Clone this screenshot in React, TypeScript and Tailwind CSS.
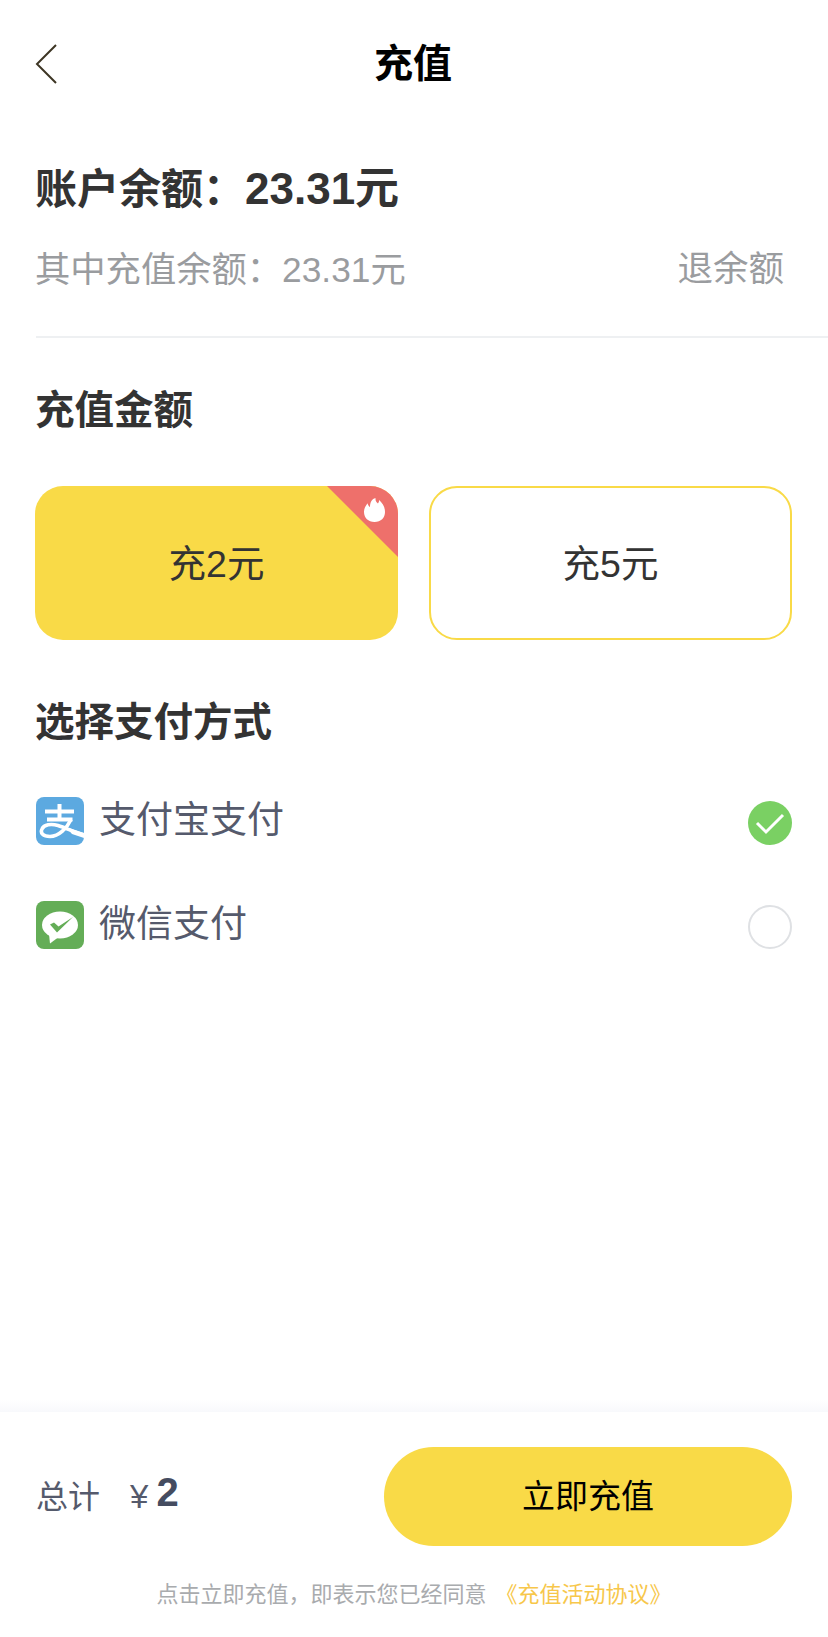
import { useState } from "react";

const fontStack = "font-['Liberation_Sans','Noto_Sans_CJK_SC',sans-serif]";

function BackIcon() {
  return (
    <svg width="24" height="42" viewBox="0 0 24 42" fill="none">
      <path d="M21 2 L2 21 L21 40" stroke="#3d3524" strokeWidth="2" />
    </svg>
  );
}

function AlipayIcon() {
  return (
    <svg width="48" height="48" viewBox="0 0 48 48" className="shrink-0">
      <rect width="48" height="48" rx="8" fill="#5ca9e0" />
      <path d="M9 14.500h29M23.500 7v15.500M11 22.500h25.500" stroke="#fff" strokeWidth="4" fill="none" />
      <path
        d="M35 22.500C31 31 23 39.500 14 39.500C7 39.500 4 36 6 32C8 27.500 15 26.500 22 28.500C30 31 38 35 48 38"
        stroke="#fff"
        strokeWidth="3.600"
        fill="none"
      />
      <path d="M30 30L48 36V41L36 37Z" fill="#fff" />
    </svg>
  );
}

function WechatIcon() {
  return (
    <svg width="48" height="48" viewBox="0 0 48 48" className="shrink-0">
      <rect width="48" height="48" rx="8" fill="#64ad57" />
      <ellipse cx="24" cy="24" rx="18" ry="13.500" fill="#fff" />
      <path d="M13 33l1 9.500l8-6z" fill="#fff" />
      <path d="M14 23.500L18 21.500L22.500 25.500L37 16L21 31.500Z" fill="#64ad57" />
    </svg>
  );
}

function FlameCorner() {
  return (
    <svg width="71" height="71" viewBox="0 0 71 71" className="absolute right-0 top-0">
      <path d="M0 0H71V71Z" fill="#ee706b" />
      <path
        d="M47.500 36c-6.200 0-10.500-4.300-10.500-10c0-4 2-6.300 3.500-8.800c.5 2 1.300 3 2.500 3.800c0-4.500 2-8.300 5.500-9c-.3 3.500 1.200 4.500 2.500 5.500c.8-1 1.200-2.200 1.200-3.500c3.300 3.500 5.800 6.500 5.800 12c0 5.800-4 10-10.500 10Z"
        fill="#fff"
      />
    </svg>
  );
}

export default function App() {
  const [amount, setAmount] = useState(2);
  const [pay, setPay] = useState("alipay");

  const payments = [
    { id: "alipay", label: "支付宝支付", icon: <AlipayIcon /> },
    { id: "wechat", label: "微信支付", icon: <WechatIcon /> },
  ];

  return (
    <div className={`flex h-[1637px] w-[828px] flex-col overflow-hidden bg-white ${fontStack}`}>
      <header className="relative flex h-[128px] items-center justify-center">
        <button type="button" className="absolute left-[35px] top-[43px]">
          <BackIcon />
        </button>
        <h1 className="pr-[2px] text-[39px] font-bold text-black">充值</h1>
      </header>

      <div className="mt-[28px] flex h-[56px] items-baseline pl-[35px] font-bold text-[#333333]">
        <span className="text-[42px]">账户余额：</span>
        <span className="text-[44px]">23.31元</span>
      </div>
      <div className="mt-[30px] flex h-[56px] items-center justify-between pl-[35px] pr-[44px] text-[35.300px] text-[#9a9c9f]">
        <span>其中充值余额：23.31元</span>
        <button type="button" className="text-[35.500px]">退余额</button>
      </div>
      <div className="ml-[36px] mt-[38px] h-[2px] bg-[#eef0f2]" />

      <h2 className="mt-[45px] flex h-[56px] items-center pl-[35px] text-[39.500px] font-bold text-[#333333]">
        充值金额
      </h2>
      <div className="mt-[47px] flex gap-[31px] px-[35px]">
        {[2, 5].map((n) => (
          <button
            key={n}
            type="button"
            onClick={() => setAmount(n)}
            className={`relative flex h-[154px] w-[363px] items-center justify-center overflow-hidden rounded-[28px] pt-[3px] text-[37.500px] text-[#333333] ${
              amount === n ? "bg-[#f9da47]" : "border-2 border-[#f9da47] bg-white"
            }`}
          >
            {n === 2 && <FlameCorner />}
            充{n}元
          </button>
        ))}
      </div>

      <h2 className="mt-[55px] flex h-[56px] items-center pl-[35px] text-[39.500px] font-bold text-[#333333]">
        选择支付方式
      </h2>
      <div className="mt-[46px] flex flex-col gap-[56px] px-[36px]">
        {payments.map((p) => (
          <div key={p.id} className="flex h-[48px] items-center" onClick={() => setPay(p.id)}>
            {p.icon}
            <span className="ml-[15px] text-[37px] text-[#555a6c]">{p.label}</span>
            {pay === p.id ? (
              <span className="ml-auto mt-[4px] flex h-[44px] w-[44px] items-center justify-center rounded-full bg-[#7ad063]">
                <svg width="30" height="24" viewBox="0 0 30 24" fill="none">
                  <path d="M2 12l9 9L28 4" stroke="#fff" strokeWidth="3" />
                </svg>
              </span>
            ) : (
              <span className="ml-auto mt-[4px] h-[44px] w-[44px] rounded-full border-2 border-[#dfe1e4]" />
            )}
          </div>
        ))}
      </div>

      <footer className="mt-auto">
        <div className="h-[12px] bg-gradient-to-b from-white to-[#f8f9fc]" />
        <div className="flex items-center justify-between px-[36px] pt-[35px]">
          <div className="flex -translate-y-[3px] items-baseline text-[#555a6c]">
            <span className="text-[32px]">总计</span>
            <span className="ml-[30px] text-[33px]">¥</span>
            <span className="ml-[8px] -translate-y-[2px] text-[40px] font-bold text-[#454c60]">{amount}</span>
          </div>
          <button
            type="button"
            className="flex h-[99px] w-[408px] items-center justify-center rounded-full bg-[#f9da47] text-[33px] text-black"
          >
            立即充值
          </button>
        </div>
        <p className="mt-[28px] flex h-[40px] items-center justify-center text-[22px] text-[#a9abae]">
          点击立即充值，即表示您已经同意
          <span className="ml-[9px] text-[#f7c74b]">《充值活动协议》</span>
        </p>
        <div className="h-[23px]" />
      </footer>
    </div>
  );
}
